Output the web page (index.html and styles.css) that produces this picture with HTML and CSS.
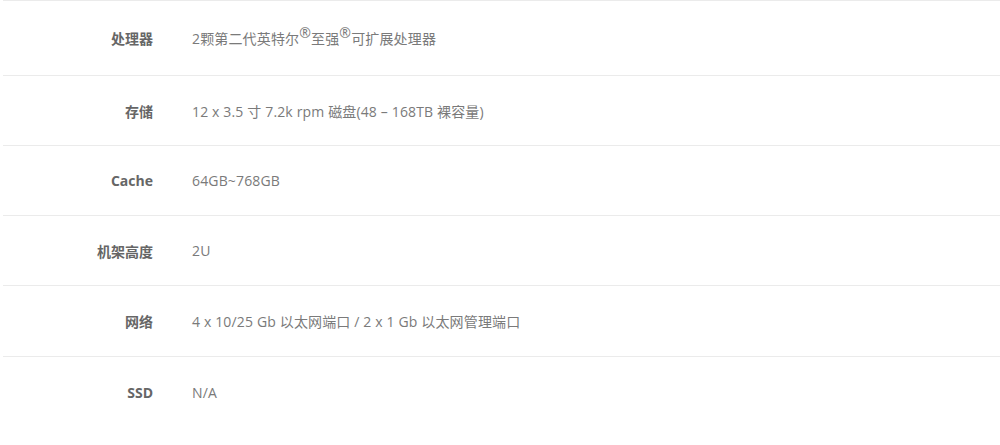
FILE: index.html
```html
<!DOCTYPE html>
<html lang="zh-CN">
<head>
  <meta charset="UTF-8" />
  <meta name="viewport" content="width=device-width, initial-scale=1.0"/>
  <title>规格参数</title>
  <link rel="stylesheet" href="styles.css">
</head>
<body>
  <section class="specs">
    <div class="spec-row first">
      <div class="spec-label">处理器</div>
      <div class="spec-value">2颗第二代英特尔<sup>®</sup>至强<sup>®</sup>可扩展处理器</div>
    </div>
    <div class="spec-row">
      <div class="spec-label">存储</div>
      <div class="spec-value">12 x 3.5 寸 7.2k rpm 磁盘(48 – 168TB 裸容量)</div>
    </div>
    <div class="spec-row">
      <div class="spec-label">Cache</div>
      <div class="spec-value">64GB~768GB</div>
    </div>
    <div class="spec-row">
      <div class="spec-label">机架高度</div>
      <div class="spec-value">2U</div>
    </div>
    <div class="spec-row tall">
      <div class="spec-label">网络</div>
      <div class="spec-value">4 x 10/25 Gb 以太网端口 / 2 x 1 Gb 以太网管理端口</div>
    </div>
    <div class="spec-row last">
      <div class="spec-label">SSD</div>
      <div class="spec-value">N/A</div>
    </div>
  </section>
</body>
</html>
```

FILE: styles.css
```css
* { box-sizing: border-box; margin: 0; padding: 0; }
body {
  font-family: "Open Sans", "Noto Sans CJK SC", sans-serif;
  background: #fff;
  color: #777;
  font-size: 14px;
}

.specs {
  margin-left: 3px;
  border-top: 1px solid #ebebeb;
}

.spec-row {
  display: flex;
  align-items: center;
  height: 70px;
  border-bottom: 1px solid #ebebeb;
}
.spec-row.first { height: 75px; }
.spec-row.tall { height: 71px; }
.spec-row.last { border-bottom: none; }

.spec-label {
  width: 150px;
  text-align: right;
  font-weight: bold;
  color: #666;
}

.spec-value {
  margin-left: 39px;
  color: #7a7a7a;
  letter-spacing: 0.15px;
}

.spec-value sup {
  font-size: 14px;
  vertical-align: 6px;
  line-height: 0;
}
```
